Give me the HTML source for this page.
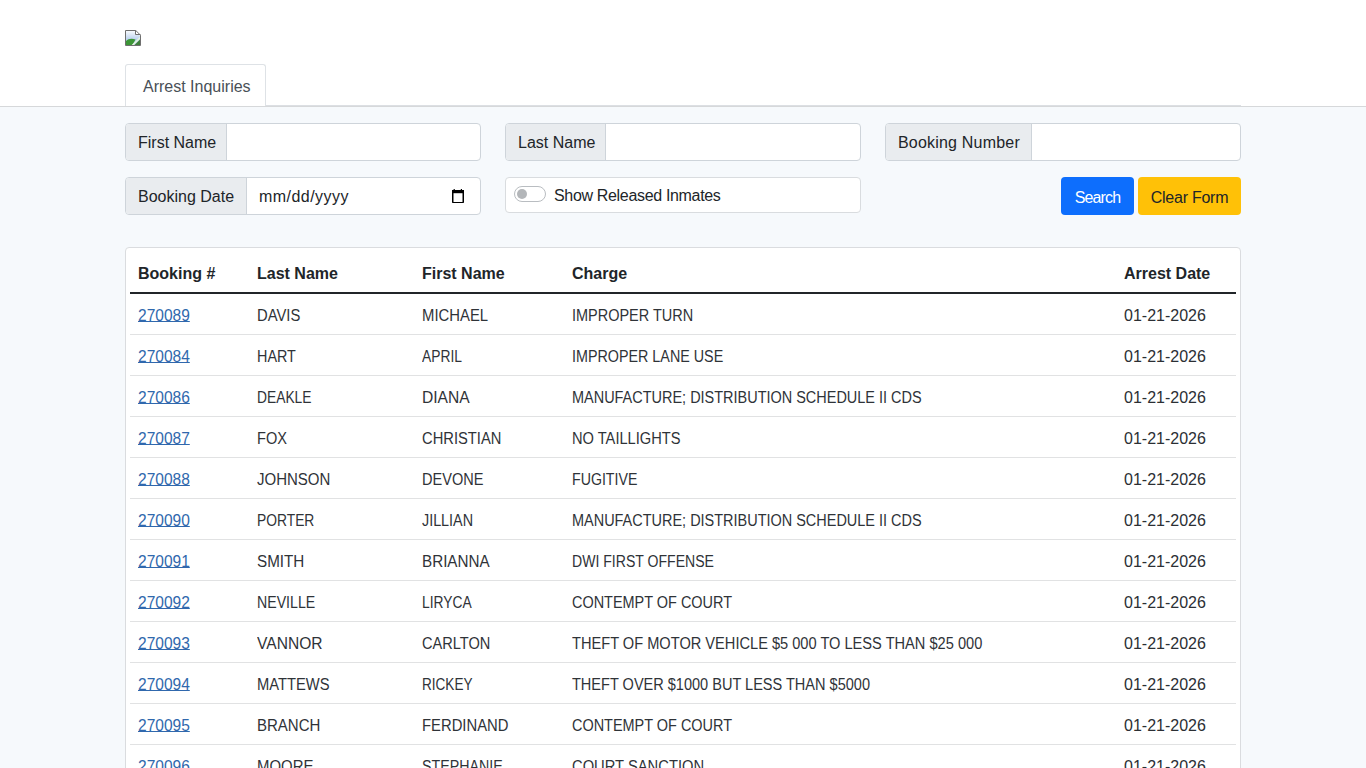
<!DOCTYPE html>
<html><head><meta charset="utf-8">
<style>
*{box-sizing:border-box;margin:0;padding:0}
html,body{width:1366px;height:768px;overflow:hidden}
body{background:#f6f9fc;font-family:"Liberation Sans",sans-serif;font-size:16px;line-height:24px;color:#212529;position:relative}
.hdr{position:absolute;left:0;top:0;width:1366px;height:107px;background:#fff;border-bottom:1px solid #d6d8da}
.tabline{position:absolute;left:125px;top:105px;width:1116px;height:1px;background:#dcdfe3}
.logo{position:absolute;left:125px;top:30px;width:16px;height:16px}
.tab{position:absolute;left:125px;top:64px;width:141px;height:42px;border:1px solid #dee2e6;border-bottom:none;border-radius:3px 3px 0 0;background:#fff;color:#495057;padding:10px 0 0 17px;white-space:nowrap}
.ig{position:absolute;height:38px;display:flex;border:1px solid #ced4da;border-radius:4px;background:#fff;overflow:hidden}
.ig .lb{background:#e9ecef;border-right:1px solid #ced4da;padding:7px 0 0 12px;white-space:nowrap;color:#212529}
.sw{position:absolute;left:505px;top:177px;width:356px;height:36px;border:1px solid #d9dcdf;border-radius:4px;background:#fff}
.sw .tg{position:absolute;left:8px;top:8px;width:32px;height:16px;border:1px solid #b9bdc1;border-radius:8px;background:#fff}
.sw .tg i{position:absolute;left:2px;top:2px;width:10px;height:10px;border-radius:50%;background:#b3b6b9}
.sw .tx{position:absolute;left:48px;top:6px;letter-spacing:-0.33px;white-space:nowrap}
.btn{position:absolute;top:177px;height:38px;border-radius:4px;text-align:center;padding-top:9px;white-space:nowrap}
.b1{left:1061px;width:73px;background:#0d6efd;color:#fff}
.b2{left:1138px;width:103px;background:#ffc107;color:#212529}
.card{position:absolute;left:125px;top:247px;width:1116px;height:600px;background:#fff;border:1px solid #dadcdf;border-radius:4px;padding:4px}
table{border-collapse:collapse;table-layout:fixed;width:1106px}
th,td{vertical-align:top;padding:10px 8px 6px 8px;text-align:left;white-space:nowrap;overflow:hidden;height:40px;border-bottom:1px solid #e1e2e3}
th{font-weight:bold;height:41px;border-bottom:2px solid #212529}
td{color:#2b2f34}
td a{color:#3068ad;text-decoration:underline;text-underline-offset:0px;display:inline-block;transform:scaleX(0.97);transform-origin:0 50%}
td b{font-weight:normal;display:inline-block;transform-origin:0 50%;color:#2f3338}
</style></head><body>
<div class="hdr"></div>
<div class="tabline"></div>
<svg class="logo" width="16" height="16" viewBox="0 0 16 16"><defs><linearGradient id="sk" x1="0" y1="0" x2="0" y2="1"><stop offset="0" stop-color="#f7fafd"/><stop offset="0.6" stop-color="#bcd2ee"/><stop offset="1" stop-color="#9fbfe6"/></linearGradient></defs><path d="M1 1H10.5L15 5.5V15H1Z" fill="url(#sk)"/><path d="M1 15V11C3.5 8.5 7 8.3 10.5 9.5L7.5 15Z" fill="#3c9636"/><path d="M9.5 15L15 9.5V15Z" fill="#3f7f3a"/><path d="M7.2 15.6L15.6 7.2" stroke="#e6f5dc" stroke-width="1.5"/><path d="M11 1L15 5H11Z" fill="#fff"/><path d="M0.5 0.5H10.8L15.5 5.2V15.5H0.5Z" fill="none" stroke="#6f6f6f"/><path d="M10.5 0.5V4.5H15.5" fill="none" stroke="#6f6f6f"/></svg>
<div class="tab">Arrest Inquiries</div>

<div class="ig" style="left:125px;top:123px;width:356px"><div class="lb" style="width:101px">First Name</div></div>
<div class="ig" style="left:505px;top:123px;width:356px"><div class="lb" style="width:100px">Last Name</div></div>
<div class="ig" style="left:885px;top:123px;width:356px"><div class="lb" style="width:146px;letter-spacing:0.2px">Booking Number</div></div>
<div class="ig" style="left:125px;top:177px;width:356px"><div class="lb" style="width:121px">Booking Date</div><div style="padding:7px 0 0 12px;letter-spacing:0.45px">mm/dd/yyyy</div>
<svg style="position:absolute;left:325px;top:9px" width="16" height="16" viewBox="0 0 16 16"><rect x="1.75" y="3.75" width="10.5" height="12" rx="1" fill="none" stroke="#000" stroke-width="1.5"/><rect x="1" y="3" width="12" height="3.2" fill="#000"/><rect x="2.6" y="2" width="1.2" height="1.5" fill="#000"/><rect x="9.8" y="2" width="1.2" height="1.5" fill="#000"/></svg></div>

<div class="sw"><div class="tg"><i></i></div><div class="tx">Show Released Inmates</div></div>
<div class="btn b1"><span style="letter-spacing:-0.9px">Search</span></div>
<div class="btn b2"><span style="letter-spacing:-0.25px">Clear Form</span></div>

<div class="card">
<table>
<colgroup><col style="width:119px"><col style="width:165px"><col style="width:150px"><col style="width:552px"><col style="width:120px"></colgroup>
<thead><tr><th>Booking #</th><th>Last Name</th><th>First Name</th><th>Charge</th><th>Arrest Date</th></tr></thead>
<tbody>
<tr><td><a>270089</a></td><td><b style="transform:scaleX(0.924)">DAVIS</b></td><td><b style="transform:scaleX(0.929)">MICHAEL</b></td><td><b style="transform:scaleX(0.905)">IMPROPER TURN</b></td><td>01-21-2026</td></tr>
<tr><td><a>270084</a></td><td><b style="transform:scaleX(0.898)">HART</b></td><td><b style="transform:scaleX(0.863)">APRIL</b></td><td><b style="transform:scaleX(0.895)">IMPROPER LANE USE</b></td><td>01-21-2026</td></tr>
<tr><td><a>270086</a></td><td><b style="transform:scaleX(0.863)">DEAKLE</b></td><td><b style="transform:scaleX(0.975)">DIANA</b></td><td><b style="transform:scaleX(0.904)">MANUFACTURE; DISTRIBUTION SCHEDULE II CDS</b></td><td>01-21-2026</td></tr>
<tr><td><a>270087</a></td><td><b style="transform:scaleX(0.910)">FOX</b></td><td><b style="transform:scaleX(0.920)">CHRISTIAN</b></td><td><b style="transform:scaleX(0.915)">NO TAILLIGHTS</b></td><td>01-21-2026</td></tr>
<tr><td><a>270088</a></td><td><b style="transform:scaleX(0.938)">JOHNSON</b></td><td><b style="transform:scaleX(0.909)">DEVONE</b></td><td><b style="transform:scaleX(0.886)">FUGITIVE</b></td><td>01-21-2026</td></tr>
<tr><td><a>270090</a></td><td><b style="transform:scaleX(0.864)">PORTER</b></td><td><b style="transform:scaleX(0.896)">JILLIAN</b></td><td><b style="transform:scaleX(0.904)">MANUFACTURE; DISTRIBUTION SCHEDULE II CDS</b></td><td>01-21-2026</td></tr>
<tr><td><a>270091</a></td><td><b style="transform:scaleX(0.950)">SMITH</b></td><td><b style="transform:scaleX(0.951)">BRIANNA</b></td><td><b style="transform:scaleX(0.879)">DWI FIRST OFFENSE</b></td><td>01-21-2026</td></tr>
<tr><td><a>270092</a></td><td><b style="transform:scaleX(0.884)">NEVILLE</b></td><td><b style="transform:scaleX(0.863)">LIRYCA</b></td><td><b style="transform:scaleX(0.903)">CONTEMPT OF COURT</b></td><td>01-21-2026</td></tr>
<tr><td><a>270093</a></td><td><b style="transform:scaleX(0.974)">VANNOR</b></td><td><b style="transform:scaleX(0.912)">CARLTON</b></td><td><b style="transform:scaleX(0.913)">THEFT OF MOTOR VEHICLE $5 000 TO LESS THAN $25 000</b></td><td>01-21-2026</td></tr>
<tr><td><a>270094</a></td><td><b style="transform:scaleX(0.921)">MATTEWS</b></td><td><b style="transform:scaleX(0.848)">RICKEY</b></td><td><b style="transform:scaleX(0.908)">THEFT OVER $1000 BUT LESS THAN $5000</b></td><td>01-21-2026</td></tr>
<tr><td><a>270095</a></td><td><b style="transform:scaleX(0.938)">BRANCH</b></td><td><b style="transform:scaleX(0.926)">FERDINAND</b></td><td><b style="transform:scaleX(0.903)">CONTEMPT OF COURT</b></td><td>01-21-2026</td></tr>
<tr><td><a>270096</a></td><td><b style="transform:scaleX(0.934)">MOORE</b></td><td><b style="transform:scaleX(0.890)">STEPHANIE</b></td><td><b style="transform:scaleX(0.921)">COURT SANCTION</b></td><td>01-21-2026</td></tr>
</tbody></table>
</div>
</body></html>
